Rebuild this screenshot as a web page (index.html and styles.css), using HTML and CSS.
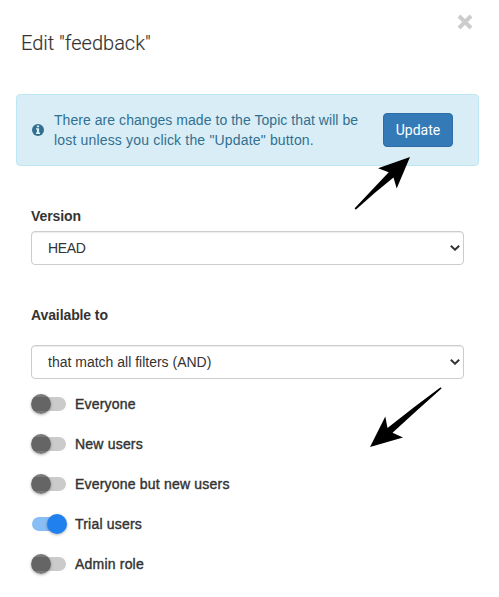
FILE: index.html
```html
<!DOCTYPE html>
<html lang="en">
<head>
    <meta charset="UTF-8">
    <meta name="viewport" content="width=device-width, initial-scale=1.0">
    <title>Edit "feedback"</title>
    <link rel="stylesheet" href="styles.css">
</head>
<body>

<div class="panel">
    <div class="panel-header">
        <h1>Edit "feedback"</h1>
        <button class="close-button" aria-label="Close">
            <svg width="16" height="16" viewBox="0 0 16 16"><path d="M2 2L14 14M14 2L2 14"/></svg>
        </button>
    </div>

    <!-- Unsaved changes -->
    <div class="alert">
        <svg class="info-icon" width="12" height="12" viewBox="0 0 12 12">
            <circle cx="6" cy="6" r="6" fill="#31708f"/>
            <path d="M4.9 1.5h2.2v1.7H4.9zM4 4.3h3.1v4.3h.9v1.4H4V8.6h.9V5.6H4z" fill="#d9edf7"/>
        </svg>
        <p class="alert-text"><span class="line-one">There are changes made to the Topic that will be</span><br><span class="line-two">lost unless you click the "Update" button.</span></p>
        <button class="update-button">Update</button>
    </div>

    <form class="topic-form">
        <label class="field-label" for="version">Version</label>
        <div class="select-box">
            <select id="version" class="version-select"><option>HEAD</option></select>
            <svg class="chevron" width="10" height="6" viewBox="0 0 10 6"><path d="M.8 .8L5 4.7L9.2 .8"/></svg>
        </div>

        <label class="field-label available-label" for="filter">Available to</label>
        <div class="select-box">
            <select id="filter"><option>that match all filters (AND)</option></select>
            <svg class="chevron" width="10" height="6" viewBox="0 0 10 6"><path d="M.8 .8L5 4.7L9.2 .8"/></svg>
        </div>

        <!-- Audience switches -->
        <div class="switch-list">
            <label class="switch"><input type="checkbox"><span class="track"></span><span class="switch-text">Everyone</span></label>
            <label class="switch"><input type="checkbox"><span class="track"></span><span class="switch-text">New users</span></label>
            <label class="switch"><input type="checkbox"><span class="track"></span><span class="switch-text">Everyone but new users</span></label>
            <label class="switch"><input type="checkbox" checked><span class="track"></span><span class="switch-text">Trial users</span></label>
            <label class="switch"><input type="checkbox"><span class="track"></span><span class="switch-text">Admin role</span></label>
        </div>
    </form>

    <!-- Pointer arrows over the panel -->
    <svg class="arrows" width="499" height="597" viewBox="0 0 499 597">
        <path d="M410 157L378 168.3L388.7 172.3Q372 190 354.7 208.3Q354.8 209.6 356 209.4Q374 193 393.5 177.5L396.7 188.5Z"/>
        <path d="M370 447L403 437.5L392.5 432.8Q417 410 441.5 388.4Q441.3 387.2 440.3 387.6Q414 407 387.5 428L385.3 416.5Z"/>
    </svg>
</div>

</body>
</html>
```

FILE: styles.css
```css
* {
    box-sizing: border-box;
}

body {
    margin: 0;
    font-family: "Liberation Sans", Arial, sans-serif;
    font-size: 14px;
    line-height: 20px;
    color: #333;
    background-color: #fff;
}

.panel {
    position: relative;
    height: 597px;
    padding: 0 20px 0 16px;
    overflow: hidden;
}

.panel-header {
    display: flex;
    justify-content: space-between;
    height: 94px;
    padding: 14px 6px 0 5px;
}

.panel-header h1 {
    margin: 17px 0 0;
    font-family: Roboto, sans-serif;
    font-size: 20px;
    font-weight: 300;
    line-height: 24px;
    -webkit-text-stroke: 0.15px #333;
}

.close-button {
    width: 16px;
    height: 16px;
    padding: 0;
    border: 0;
    background: none;
}

.close-button svg {
    display: block;
    fill: none;
    stroke: #ccc;
    stroke-width: 4;
}

/* Alert */
.alert {
    display: flex;
    align-items: center;
    height: 72px;
    padding: 0 25px 0 15px;
    border: 1px solid #bce8f1;
    border-radius: 4px;
    color: #31708f;
    background-color: #d9edf7;
}

.alert-text {
    flex: 1;
    margin: 0 0 0 10px;
    white-space: nowrap;
}

.line-one {
    letter-spacing: 0.05px;
}

.line-two {
    letter-spacing: 0.17px;
}

.update-button {
    width: 70px;
    height: 34px;
    padding: 0;
    border: 1px solid #2e6da4;
    border-radius: 4px;
    font-family: Roboto, sans-serif;
    font-size: 14px;
    color: #fff;
    background-color: #337ab7;
}

/* Form fields */
.topic-form {
    padding: 40px 15px 0;
}

.field-label {
    display: block;
    margin-bottom: 5px;
    font-weight: bold;
    letter-spacing: -0.1px;
}

.available-label {
    margin: 40px 0 20px;
}

.select-box {
    position: relative;
    height: 34px;
}

.select-box select {
    width: 100%;
    height: 34px;
    padding: 0 16px;
    border: 1px solid #ccc;
    border-radius: 4px;
    font: inherit;
    color: #333;
    background-color: #fff;
    box-shadow: inset 0 1px 1px rgba(0, 0, 0, 0.075);
    appearance: none;
}

.select-box .version-select {
    letter-spacing: -0.35px;
}

.chevron {
    position: absolute;
    right: 4px;
    top: 14px;
    fill: none;
    stroke: #333;
    stroke-width: 2;
}

/* Switches */
.switch-list {
    padding-top: 5px;
}

.switch {
    display: flex;
    align-items: center;
    height: 40px;
}

.switch input {
    position: absolute;
    opacity: 0;
}

.track {
    position: relative;
    width: 34px;
    height: 14px;
    margin: 0 9px 0 1px;
    border-radius: 7px;
    background-color: #cbcbcb;
}

.track::after {
    content: "";
    position: absolute;
    left: -1px;
    top: -3px;
    width: 20px;
    height: 20px;
    border-radius: 50%;
    background: linear-gradient(#7a7a7a 3px, #656565 3px, #656565 17px, #7a7a7a 17px);
    box-shadow: 0 1px 3px rgba(0, 0, 0, 0.3);
}

.switch input:checked + .track {
    background-color: #89bdf5;
}

.switch input:checked + .track::after {
    left: 15px;
    background: #2080ee;
}

.switch-text {
    letter-spacing: 0.2px;
    -webkit-text-stroke: 0.4px #333;
}

.arrows {
    position: absolute;
    left: 0;
    top: 0;
    pointer-events: none;
}
```
